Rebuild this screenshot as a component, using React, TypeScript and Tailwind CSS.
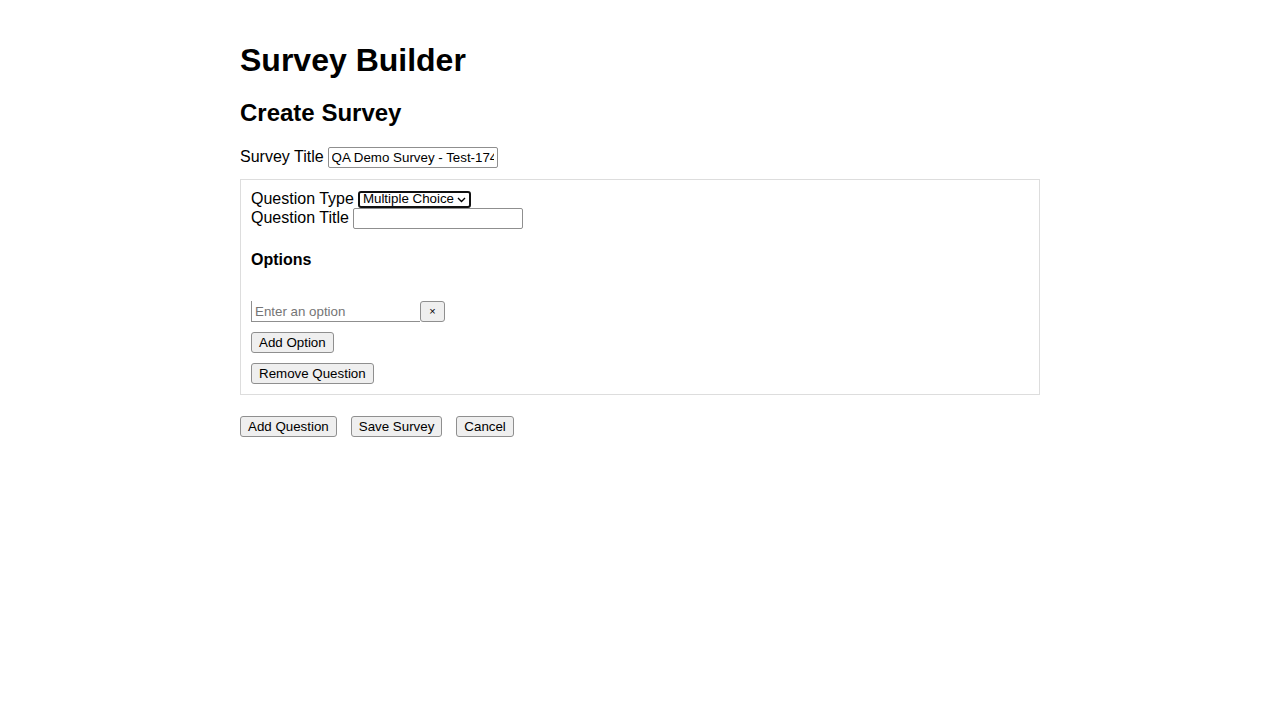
import React from "react";

const btn =
  "h-[21px] px-[7px] border border-[#8f8f8f] rounded-[3px] bg-[#efefef] text-[13.33px] leading-none text-black";

export default function App() {
  return (
    <div className="min-h-screen bg-white text-black" style={{ fontFamily: '"Liberation Sans", Arial, sans-serif' }}>
      <div className="w-[800px] mx-auto pt-[20px]">
        <h1 className="mt-[22px] mb-[20px] h-[37px] text-[32px] leading-[37px] font-bold">Survey Builder</h1>
        <h2 className="mb-[20px] h-[28px] text-[24px] leading-[28px] font-bold">Create Survey</h2>

        <div className="flex items-center h-[21px] mb-[11px] text-[16px]">
          <span className="-mt-[2px]">Survey Title</span>
          <input
            className="ml-[4px] w-[170px] h-[21px] px-[3px] border border-[#8f8f8f] rounded-[2px] text-[13.33px] text-black"
            defaultValue="QA Demo Survey - Test-1745"
          />
        </div>

        <div className="border border-[#dddddd] p-[10px]">
          <div className="flex items-center h-[18px] text-[16px]">
            <span>Question Type</span>
            <div className="ml-[4px] w-[113px] h-[17px] border-2 border-[#111] rounded-[3px] flex items-center justify-between pl-[3px] pr-[3px] text-[13.33px] leading-none">
              <span>Multiple Choice</span>
              <svg width="9" height="6" viewBox="0 0 9 6" className="mt-[1px]">
                <path d="M1 1 L4.5 4.5 L8 1" fill="none" stroke="#000" strokeWidth="1.4" />
              </svg>
            </div>
          </div>
          <div className="flex items-center h-[21px] text-[16px]">
            <span className="-mt-[2px]">Question Title</span>
            <input className="ml-[4px] w-[170px] h-[21px] px-[3px] border border-[#8f8f8f] rounded-[2px] text-[13.33px]" />
          </div>

          <h4 className="mt-[22px] mb-[32px] h-[18px] text-[16px] leading-[18px] font-bold">Options</h4>

          <div className="flex h-[21px]">
            <input
              className="w-[169px] h-[21px] px-[3px] border-l border-b border-[#8f8f8f] text-[13.33px] placeholder:text-[#757575]"
              placeholder="Enter an option"
            />
            <button className="h-[21px] w-[25px] border border-[#8f8f8f] rounded-[3px] bg-[#efefef] text-[11px] leading-none flex items-center justify-center">
              ×
            </button>
          </div>

          <div className="mt-[10px] flex">
            <button className={btn}>Add Option</button>
          </div>
          <div className="mt-[10px] flex">
            <button className={btn}>Remove Question</button>
          </div>
        </div>

        <div className="mt-[21px] flex gap-[14px]">
          <button className={btn}>Add Question</button>
          <button className={btn}>Save Survey</button>
          <button className={btn}>Cancel</button>
        </div>
      </div>
    </div>
  );
}
